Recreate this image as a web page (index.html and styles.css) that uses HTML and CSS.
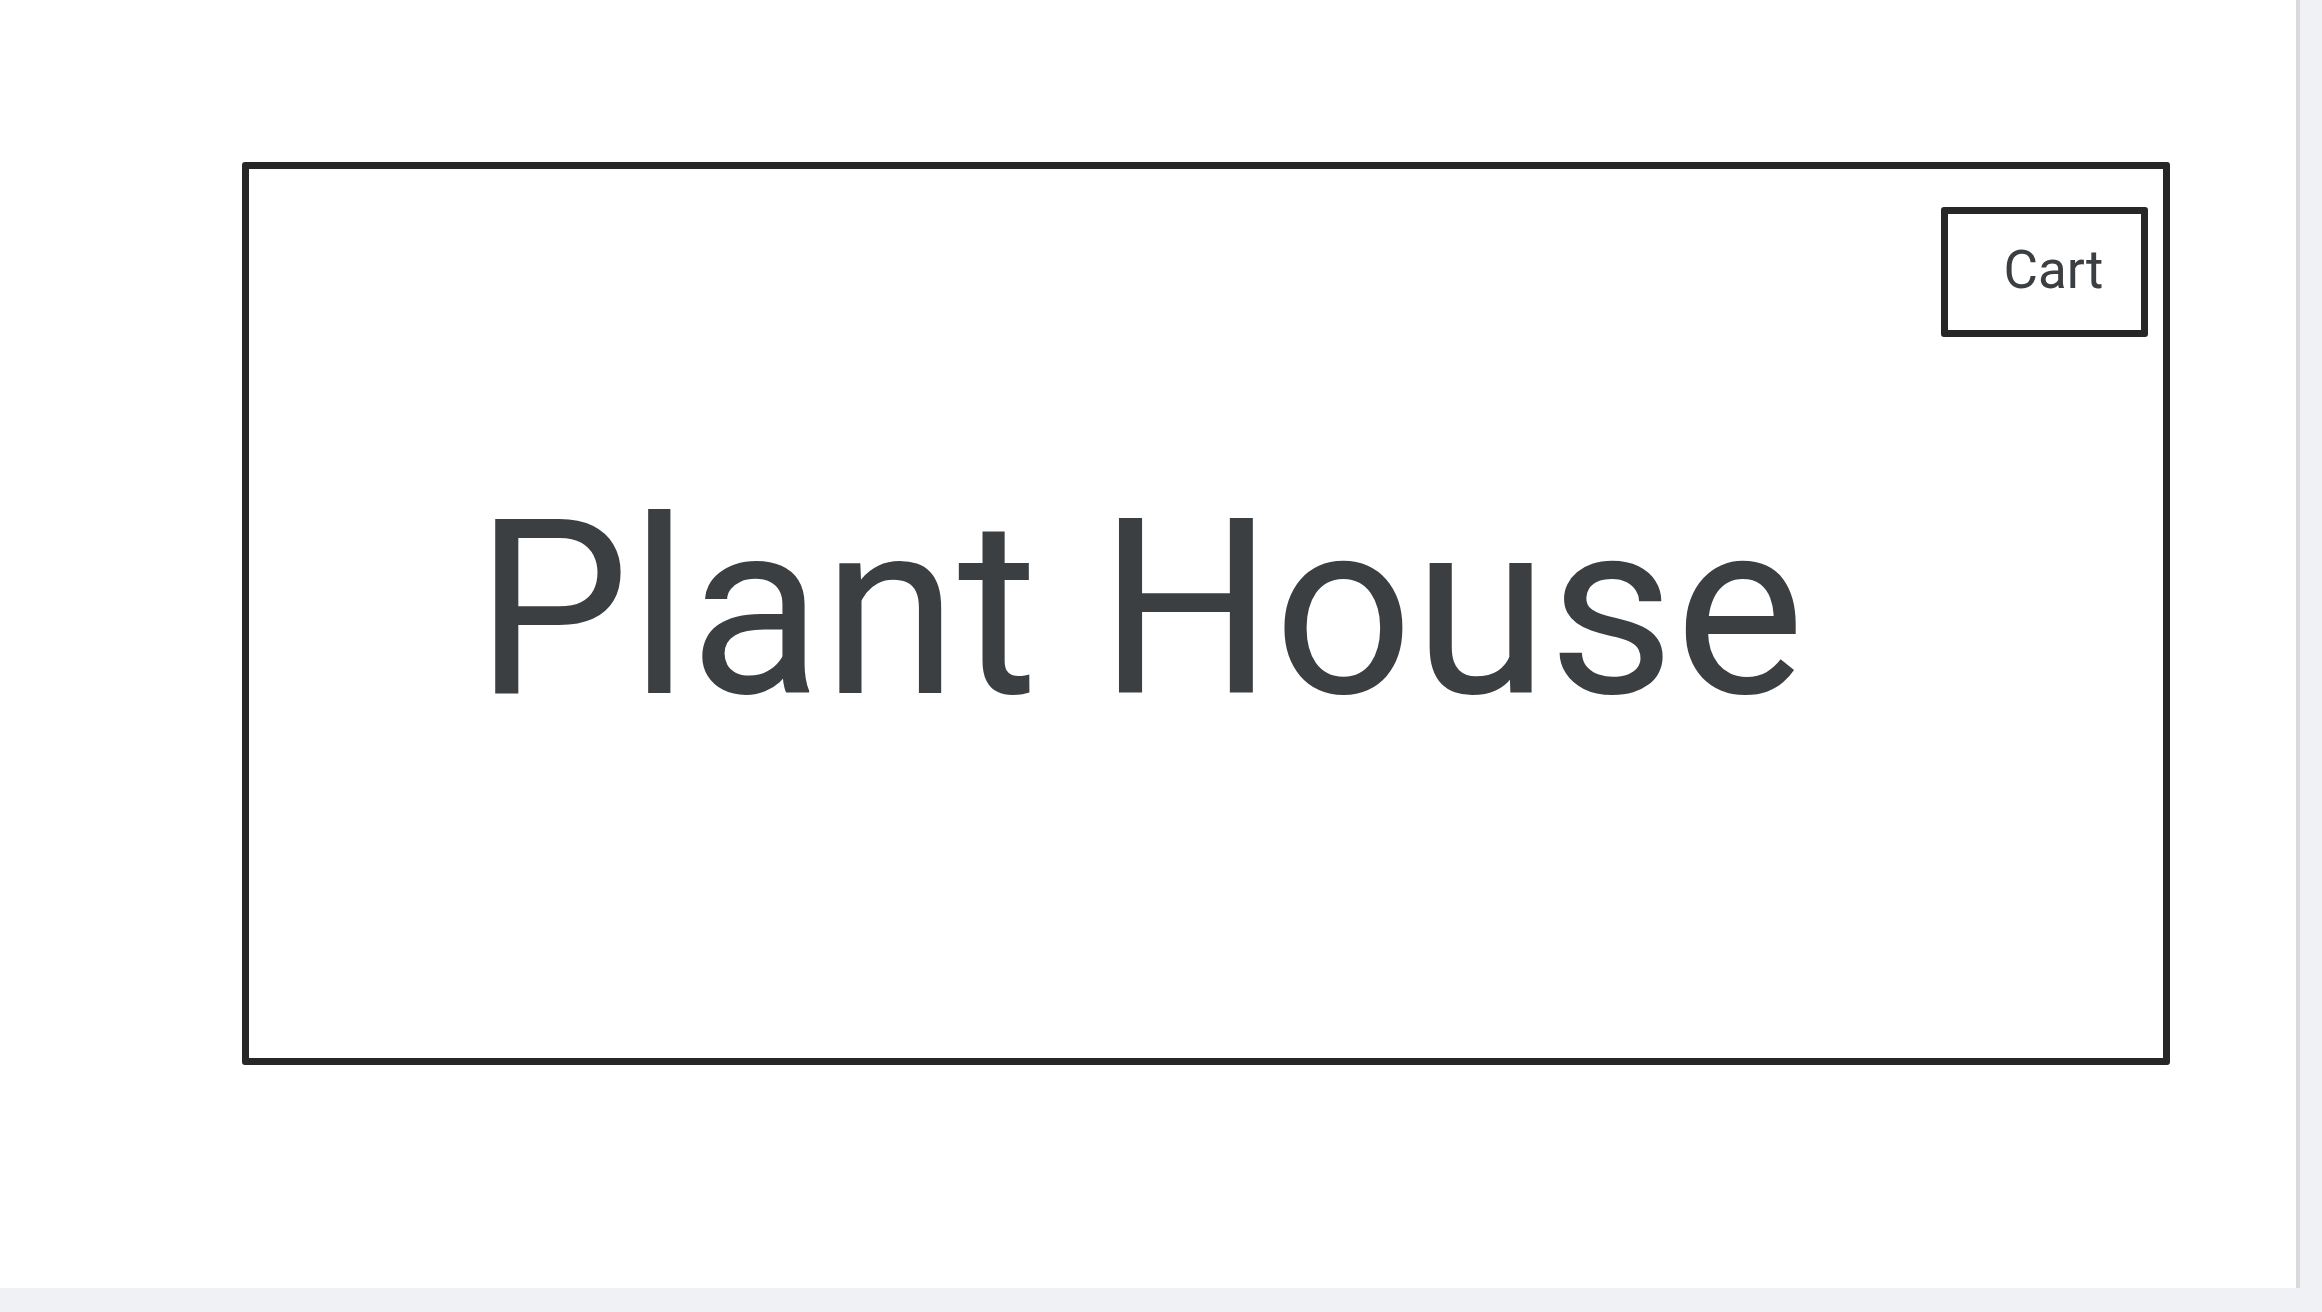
FILE: index.html
```html
<!DOCTYPE html>
<html lang="en">
<head>
<meta charset="utf-8">
<title>Plant House</title>
<link rel="stylesheet" href="styles.css">
</head>
<body>
<div class="viewport">
  <main class="main">
    <section class="frame">
      <div class="frame-top">
        <button class="cart">Cart</button>
      </div>
      <h1 class="title">Plant House</h1>
    </section>
  </main>
  <div class="vscroll"></div>
  <div class="hscroll"></div>
</div>
</body>
</html>
```

FILE: styles.css
```css
html, body {
  margin: 0;
  padding: 0;
  background: #ffffff;
}

body {
  font-family: Roboto, "Liberation Sans", sans-serif;
  color: #3c3f42;
}

.viewport {
  display: grid;
  grid-template-columns: 1fr 26px;
  grid-template-rows: 1288px 24px;
  height: 100vh;
  overflow: hidden;
}

.main {
  box-sizing: border-box;
  padding: 162px 126px 223px 242px;
  min-width: 0;
}

.vscroll {
  background: #f0f1f4;
  border-left: 4px solid #dadadd;
}

.hscroll {
  grid-column: 1 / -1;
  background: #f0f1f4;
}

.frame {
  box-sizing: border-box;
  height: 100%;
  border: 7px solid #272727;
  border-radius: 3px;
  display: flex;
  flex-direction: column;
}

.frame-top {
  display: flex;
  justify-content: flex-end;
  padding: 38px 15px 0 0;
}

.cart {
  box-sizing: border-box;
  width: 207px;
  height: 130px;
  border: 7px solid #272727;
  border-radius: 3px;
  background: #ffffff;
  display: flex;
  align-items: center;
  justify-content: center;
  padding: 0 0 4px 18px;
  font-family: Roboto, "Liberation Sans", sans-serif;
  font-size: 53px;
  line-height: 1;
  color: #3c3f42;
}

.title {
  margin: 150px 0 0 226px;
  font-size: 245px;
  font-weight: 400;
  line-height: 1;
  color: #3c3f42;
  white-space: nowrap;
}
```
